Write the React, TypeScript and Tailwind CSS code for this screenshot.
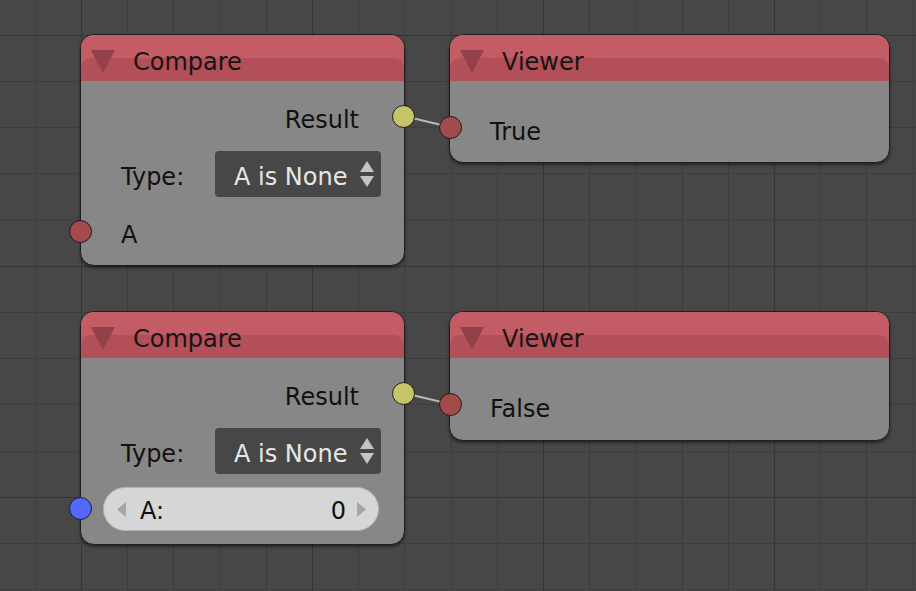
import React from 'react';

const CELL = 46.2;
const OFFSET = 34.7;

type SocketKind = 'yellow' | 'red' | 'blue';

const socketColor: Record<SocketKind, string> = {
    yellow: 'bg-[#c6c46a]',
    red: 'bg-[#a34a4b]',
    blue: 'bg-[#5468ff]',
};

// background grid of the node editor
const Grid: React.FC = () => {
    const cols = Array.from({ length: 20 }, (_, i) => i);
    const rows = Array.from({ length: 13 }, (_, i) => i);
    return (
        <svg className="absolute inset-0" width="916" height="591">
            {cols.map((i) => {
                const x = Math.round(OFFSET + i * CELL) + 0.5;
                return <line key={'v' + i} x1={x} y1={0} x2={x} y2={591} stroke={i % 5 === 1 ? '#353535' : '#3d3d3d'} strokeWidth={1} />;
            })}
            {rows.map((i) => {
                const y = Math.round(OFFSET + i * CELL) + 0.5;
                return <line key={'h' + i} x1={0} y1={y} x2={916} y2={y} stroke={i % 5 === 0 ? '#353535' : '#3d3d3d'} strokeWidth={1} />;
            })}
        </svg>
    );
};

const Collapse: React.FC = () => (
    <svg width="24" height="23" viewBox="0 0 24 23" className="shrink-0">
        <polygon points="0,0 24,0 12,23" fill="#94404a" />
    </svg>
);

const NodeHeader: React.FC<{ title: string }> = ({ title }) => (
    <div className="relative h-[46px] rounded-t-[13px] bg-[#c45c66]">
        {/* darker lower band */}
        <div className="absolute inset-x-0 bottom-0 h-[23px] rounded-t-[10px] bg-[#b34f59]" />
        <div className="relative flex h-full items-center pl-[10px]">
            <div className="pt-[7px]">
                <Collapse />
            </div>
            <span className="ml-[18px] pt-[7px] text-[#151515]">{title}</span>
        </div>
    </div>
);

const Socket: React.FC<{ kind: SocketKind; x: number; y: number }> = ({ kind, x, y }) => (
    <div
        className={`absolute h-[23px] w-[23px] rounded-full border border-[#1c1c1c] ${socketColor[kind]}`}
        style={{ left: x - 11.5, top: y - 11.5 }}
    />
);

const Dropdown: React.FC = () => (
    <div className="flex h-[46px] w-[166px] items-center justify-between rounded-[4px] bg-[#474747] pl-[19px] pr-[6px]">
        <span className="pt-[5px] text-[#e6e6e6]">A is None</span>
        <svg width="16" height="27" viewBox="0 0 16 27">
            <polygon points="8,0 15,11 1,11" fill="#c4c4c4" />
            <polygon points="1,15 15,15 8,26" fill="#c4c4c4" />
        </svg>
    </div>
);

const TypeRow: React.FC<{ className?: string }> = ({ className }) => (
    <div className={`flex h-[46px] items-center justify-between pl-[40px] pr-[23px] ${className ?? ''}`}>
        <span className="pt-[5px]">Type:</span>
        <Dropdown />
    </div>
);

const ResultRow: React.FC = () => (
    <div className="mt-[15px] flex h-[46px] items-center justify-end pr-[45px]">
        <span className="pt-[1px]">Result</span>
    </div>
);

const App: React.FC = () => {
    return (
        <div className="relative h-[591px] w-[916px] overflow-hidden bg-[#474747] font-['DejaVu_Sans',sans-serif] text-[24px] text-[#111]">
            <Grid />

            {/* top pair */}
            <div className="absolute left-[80px] top-[34px] flex h-[232px] w-[325px] flex-col rounded-[14px] border border-[#1e1e1e] bg-[#878787] shadow-[0_2px_3px_rgba(0,0,0,0.45)]">
                <NodeHeader title="Compare" />
                <ResultRow />
                <TypeRow className="mt-[9px]" />
                <div className="mt-[15px] flex h-[46px] items-center pl-[40px]">
                    <span>A</span>
                </div>
            </div>

            <div className="absolute left-[449px] top-[34px] flex h-[129px] w-[441px] flex-col rounded-[14px] border border-[#1e1e1e] bg-[#878787] shadow-[0_2px_3px_rgba(0,0,0,0.45)]">
                <NodeHeader title="Viewer" />
                <div className="mt-[27px] flex h-[46px] items-center pl-[40px]">
                    <span className="pt-[1px]">True</span>
                </div>
            </div>

            {/* bottom pair */}
            <div className="absolute left-[80px] top-[311px] flex h-[234px] w-[325px] flex-col rounded-[14px] border border-[#1e1e1e] bg-[#878787] shadow-[0_2px_3px_rgba(0,0,0,0.45)]">
                <NodeHeader title="Compare" />
                <ResultRow />
                <TypeRow className="mt-[9px]" />
                <div className="mt-[13px] pl-[22px]">
                    <div className="flex h-[44px] w-[276px] items-center rounded-full border border-[#b4b4b4] bg-[#d6d6d6] pl-[13px] pr-[12px]">
                        <svg width="9" height="15" viewBox="0 0 9 15">
                            <polygon points="9,0 9,15 0,7.5" fill="#a6a6a6" />
                        </svg>
                        <span className="ml-[14px] pt-[4px]">A:</span>
                        <span className="ml-auto pt-[4px]">0</span>
                        <svg width="9" height="15" viewBox="0 0 9 15" className="ml-[11px]">
                            <polygon points="0,0 9,7.5 0,15" fill="#a6a6a6" />
                        </svg>
                    </div>
                </div>
            </div>

            <div className="absolute left-[449px] top-[311px] flex h-[130px] w-[441px] flex-col rounded-[14px] border border-[#1e1e1e] bg-[#878787] shadow-[0_2px_3px_rgba(0,0,0,0.45)]">
                <NodeHeader title="Viewer" />
                <div className="mt-[27px] flex h-[46px] items-center pl-[40px]">
                    <span className="pt-[1px]">False</span>
                </div>
            </div>

            {/* links */}
            <svg className="absolute inset-0" width="916" height="591">
                <line x1={403.5} y1={116} x2={450} y2={127} stroke="#b9b9b9" strokeWidth={2} />
                <line x1={403.5} y1={393} x2={450} y2={404} stroke="#b9b9b9" strokeWidth={2} />
            </svg>

            <Socket kind="yellow" x={403.5} y={116} />
            <Socket kind="red" x={450} y={127} />
            <Socket kind="red" x={80.5} y={231} />
            <Socket kind="yellow" x={403.5} y={393} />
            <Socket kind="red" x={450} y={404} />
            <Socket kind="blue" x={80.5} y={508} />
        </div>
    );
};

export default App;
